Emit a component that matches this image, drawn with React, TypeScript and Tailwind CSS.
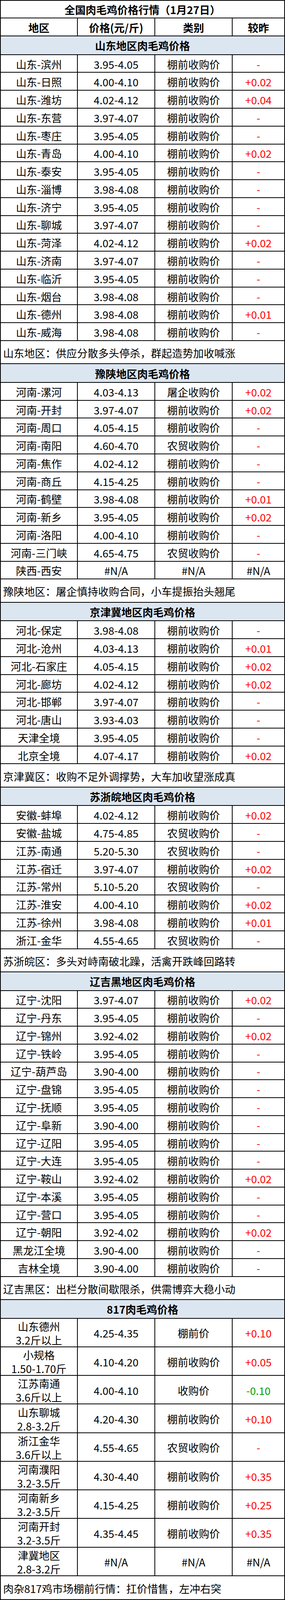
import React from "react";

type Row = [string, string, string, string];

type Section = {
  title: string;
  rows: Row[];
  note: string;
  double?: boolean;
};

const QP = "棚前收购价";
const NM = "农贸收购价";

const sections: Section[] = [
  {
    title: "山东地区肉毛鸡价格",
    rows: [
      ["山东-滨州", "3.95-4.05", QP, "-"],
      ["山东-日照", "4.00-4.10", QP, "+0.02"],
      ["山东-潍坊", "4.02-4.12", QP, "+0.04"],
      ["山东-东营", "3.97-4.07", QP, "-"],
      ["山东-枣庄", "3.95-4.05", QP, "-"],
      ["山东-青岛", "4.00-4.10", QP, "+0.02"],
      ["山东-泰安", "3.95-4.05", QP, "-"],
      ["山东-淄博", "3.98-4.08", QP, "-"],
      ["山东-济宁", "3.95-4.05", QP, "-"],
      ["山东-聊城", "3.97-4.07", QP, "-"],
      ["山东-菏泽", "4.02-4.12", QP, "+0.02"],
      ["山东-济南", "3.97-4.07", QP, "-"],
      ["山东-临沂", "3.95-4.05", QP, "-"],
      ["山东-烟台", "3.98-4.08", QP, "-"],
      ["山东-德州", "3.98-4.08", QP, "+0.01"],
      ["山东-威海", "3.98-4.08", QP, "-"],
    ],
    note: "山东地区：供应分散多头停杀，群起造势加收喊涨",
  },
  {
    title: "豫陕地区肉毛鸡价格",
    rows: [
      ["河南-漯河", "4.03-4.13", "屠企收购价", "+0.02"],
      ["河南-开封", "3.97-4.07", QP, "+0.02"],
      ["河南-周口", "4.05-4.15", QP, "-"],
      ["河南-南阳", "4.60-4.70", NM, "-"],
      ["河南-焦作", "4.02-4.12", QP, "-"],
      ["河南-商丘", "4.15-4.25", QP, "-"],
      ["河南-鹤壁", "3.98-4.08", QP, "+0.01"],
      ["河南-新乡", "3.95-4.05", QP, "+0.02"],
      ["河南-洛阳", "4.00-4.10", QP, "-"],
      ["河南-三门峡", "4.65-4.75", NM, "-"],
      ["陕西-西安", "#N/A", "#N/A", "#N/A"],
    ],
    note: "豫陕地区：屠企慎持收购合同，小车提振抬头翘尾",
  },
  {
    title: "京津冀地区肉毛鸡价格",
    rows: [
      ["河北-保定", "3.98-4.08", QP, "-"],
      ["河北-沧州", "4.03-4.13", QP, "+0.01"],
      ["河北-石家庄", "4.05-4.15", QP, "+0.02"],
      ["河北-廊坊", "4.02-4.12", QP, "+0.02"],
      ["河北-邯郸", "3.97-4.07", QP, "-"],
      ["河北-唐山", "3.93-4.03", QP, "-"],
      ["天津全境", "3.95-4.05", QP, "-"],
      ["北京全境", "4.07-4.17", QP, "+0.02"],
    ],
    note: "京津冀区：收购不足外调撑势，大车加收望涨成真",
  },
  {
    title: "苏浙皖地区肉毛鸡价格",
    rows: [
      ["安徽-蚌埠", "4.02-4.12", QP, "+0.02"],
      ["安徽-盐城", "4.75-4.85", NM, "-"],
      ["江苏-南通", "5.20-5.30", NM, "-"],
      ["江苏-宿迁", "3.97-4.07", QP, "+0.02"],
      ["江苏-常州", "5.10-5.20", NM, "-"],
      ["江苏-淮安", "4.00-4.10", QP, "+0.02"],
      ["江苏-徐州", "3.98-4.08", QP, "+0.01"],
      ["浙江-金华", "4.55-4.65", NM, "-"],
    ],
    note: "苏浙皖区：多头对峙南破北躁，活禽开跌峰回路转",
  },
  {
    title: "辽吉黑地区肉毛鸡价格",
    rows: [
      ["辽宁-沈阳", "3.97-4.07", QP, "+0.02"],
      ["辽宁-丹东", "3.95-4.05", QP, "-"],
      ["辽宁-锦州", "3.92-4.02", QP, "+0.02"],
      ["辽宁-铁岭", "3.95-4.05", QP, "-"],
      ["辽宁-葫芦岛", "3.90-4.00", QP, "-"],
      ["辽宁-盘锦", "3.95-4.05", QP, "-"],
      ["辽宁-抚顺", "3.95-4.05", QP, "-"],
      ["辽宁-阜新", "3.90-4.00", QP, "-"],
      ["辽宁-辽阳", "3.95-4.05", QP, "-"],
      ["辽宁-大连", "3.95-4.05", QP, "-"],
      ["辽宁-鞍山", "3.92-4.02", QP, "+0.02"],
      ["辽宁-本溪", "3.95-4.05", QP, "-"],
      ["辽宁-营口", "3.95-4.05", QP, "-"],
      ["辽宁-朝阳", "3.92-4.02", QP, "+0.02"],
      ["黑龙江全境", "3.90-4.00", QP, "-"],
      ["吉林全境", "3.90-4.00", QP, "-"],
    ],
    note: "辽吉黑区：出栏分散间歇限杀，供需博弈大稳小动",
  },
  {
    title: "817肉毛鸡价格",
    double: true,
    rows: [
      ["山东德州\n3.2斤以上", "4.25-4.35", "棚前价", "+0.10"],
      ["小规格\n1.50-1.70斤", "4.10-4.20", QP, "+0.05"],
      ["江苏南通\n3.6斤以上", "4.00-4.10", "收购价", "-0.10"],
      ["山东聊城\n2.8-3.2斤", "4.20-4.30", QP, "+0.10"],
      ["浙江金华\n3.6斤以上", "4.55-4.65", NM, "-"],
      ["河南濮阳\n3.2-3.5斤", "4.30-4.40", QP, "+0.35"],
      ["河南新乡\n3.2-3.5斤", "4.15-4.25", QP, "+0.25"],
      ["河南开封\n3.2-3.5斤", "4.35-4.45", QP, "+0.35"],
      ["津冀地区\n2.8-3.2斤", "#N/A", "#N/A", "#N/A"],
    ],
    note: "肉杂817鸡市场棚前行情：扛价惜售，左冲右突",
  },
];

function changeColor(v: string) {
  if (v === "#N/A") return "text-black";
  if (v.startsWith("-") && v.length > 1) return "text-[#00a000]";
  return "text-[#ff0000]";
}

function DataRow({ row, double }: { row: Row; double?: boolean }) {
  const [region, price, kind, change] = row;
  const lines = region.split("\n");
  return (
    <div
      className={`flex basis-0 min-h-0 overflow-hidden border-b-2 border-black ${
        double ? "grow-[83]" : "grow-[51]"
      }`}
    >
      <div className="w-[197px] shrink-0 border-r-2 border-black flex flex-col items-center justify-center gap-[8px] pt-[3px] whitespace-nowrap">
        {lines.map((l, i) => (
          <div key={i}>{l}</div>
        ))}
      </div>
      <div className="w-[198px] shrink-0 border-r-2 border-black flex items-center justify-center pt-[3px]">
        {price}
      </div>
      <div className="w-[198px] shrink-0 border-r-2 border-black flex items-center justify-center pt-[3px]">
        {kind}
      </div>
      <div
        className={`flex-1 flex items-center justify-center pt-[3px] ${changeColor(change)}`}
      >
        {change}
      </div>
    </div>
  );
}

export default function App() {
  return (
    <div className="w-[729px] h-screen flex flex-col border-2 border-black bg-white text-black font-['Noto_Sans_CJK_SC','Noto_Sans',sans-serif] text-[27px] leading-none">
      <div className="grow-[48] basis-0 min-h-0 border-b-2 border-black flex items-center justify-center font-bold pt-[2px]">
        全国肉毛鸡价格行情（1月27日）
      </div>
      <div className="grow-[51] basis-0 min-h-0 flex border-b-2 border-black font-bold">
        <div className="w-[197px] shrink-0 border-r-2 border-black flex items-center justify-center pt-[2px]">
          地区
        </div>
        <div className="w-[198px] shrink-0 border-r-2 border-black flex items-center justify-center pt-[2px]">
          价格(元/斤)
        </div>
        <div className="w-[198px] shrink-0 border-r-2 border-black flex items-center justify-center pt-[2px]">
          类别
        </div>
        <div className="flex-1 flex items-center justify-center pt-[2px]">
          较昨
        </div>
      </div>
      {sections.map((s, si) => (
        <React.Fragment key={si}>
          <div className="grow-[51] basis-0 min-h-0 bg-[#dce6f1] border-b-2 border-black flex items-center justify-center font-bold pt-[2px]">
            {s.title}
          </div>
          {s.rows.map((r, ri) => (
            <DataRow key={ri} row={r} double={s.double} />
          ))}
          {si === sections.length - 1 ? (
            <div className="grow-[64] basis-0 min-h-0 flex items-center pl-[6px] pt-[4px] whitespace-nowrap">
              {s.note}
            </div>
          ) : (
            <div className="grow-[62] basis-0 min-h-0 flex items-center pl-[6px] pt-[4px] whitespace-nowrap border-b-2 border-black">
              {s.note}
            </div>
          )}
        </React.Fragment>
      ))}
    </div>
  );
}
